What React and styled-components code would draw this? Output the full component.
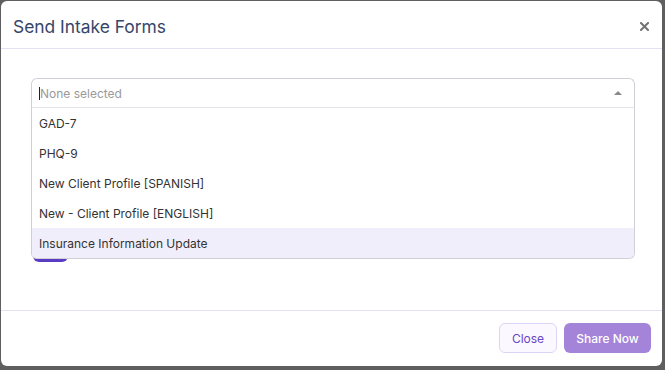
import React from 'react';
import styled, { createGlobalStyle } from 'styled-components';

const GlobalStyle = createGlobalStyle`
  html, body {
    margin: 0;
    padding: 0;
    background: #5f5f5f;
    font-family: Inter, 'Noto Sans', sans-serif;
  }
  * { box-sizing: border-box; }
`;

const options = [
  'GAD-7',
  'PHQ-9',
  'New Client Profile [SPANISH]',
  'New - Client Profile [ENGLISH]',
  'Insurance Information Update',
];

const App = () => {
  return (
    <Backdrop>
      <GlobalStyle />
      <Modal>
        <Header>
          <Title>Send Intake Forms</Title>
          <CloseX aria-label="close">
            <svg width="9" height="9" viewBox="0 0 9 9">
              <path d="M1 1 L8 8 M8 1 L1 8" stroke="#747474" strokeWidth="2" strokeLinecap="square" />
            </svg>
          </CloseX>
        </Header>
        <Body>
          <SelectWrap>
            <Control>
              <Caret />
              <Placeholder>None selected</Placeholder>
              <Arrow />
            </Control>
            <Menu>
              {options.map((o, i) => (
                <Option key={o} $active={i === options.length - 1}>{o}</Option>
              ))}
            </Menu>
          </SelectWrap>
          <AddButton />
        </Body>
        <Footer>
          <GhostButton>Close</GhostButton>
          <PrimaryButton>Share Now</PrimaryButton>
        </Footer>
      </Modal>
    </Backdrop>
  );
};

export default App;

const Backdrop = styled.div`
  width: 665px;
  height: 370px;
  padding: 1px 3px 4px 1px;
`;

const Modal = styled.div`
  width: 661px;
  height: 365px;
  background: #fff;
  border-radius: 6px;
  display: flex;
  flex-direction: column;
  overflow: hidden;
`;

const Header = styled.div`
  height: 48px;
  flex: none;
  display: flex;
  align-items: center;
  justify-content: space-between;
  padding: 3px 13px 0 12px;
  border-bottom: 1px solid #e4e1f2;
`;

const Title = styled.h2`
  margin: 0;
  font-size: 17.4px;
  font-weight: 400;
  color: #36466a;
`;

const CloseX = styled.button`
  border: 0;
  background: none;
  padding: 0;
  display: flex;
`;

const Body = styled.div`
  height: 261px;
  flex: none;
  padding: 29px 31px 0 30px;
  display: flex;
  flex-direction: column;
  align-items: flex-start;
`;

const SelectWrap = styled.div`
  position: relative;
  width: 604px;
  z-index: 2;
`;

const Control = styled.div`
  height: 30px;
  border: 1px solid #cfcfd6;
  border-bottom-color: #dcdce2;
  border-radius: 6px 6px 0 0;
  display: flex;
  align-items: center;
  padding: 0 12px 0 7px;
  background: #fff;
`;

const Caret = styled.span`
  width: 1px;
  height: 13px;
  background: #222;
`;

const Placeholder = styled.span`
  flex: 1;
  font-size: 12px;
  color: #9a9a9a;
`;

const Arrow = styled.span`
  width: 0;
  height: 0;
  border-left: 4px solid transparent;
  border-right: 4px solid transparent;
  border-bottom: 4px solid #8a8a8a;
`;

const Menu = styled.div`
  position: absolute;
  left: 0;
  right: 0;
  top: 29px;
  background: #fff;
  border: 1px solid #cfcfd6;
  border-top: 1px solid #e4e4ea;
  border-radius: 0 0 6px 6px;
  overflow: hidden;
`;

const Option = styled.div`
  height: 30px;
  display: flex;
  align-items: center;
  padding: 0 7px;
  font-size: 12px;
  color: #333;
  background: ${p => (p.$active ? '#f1eefc' : '#fff')};
`;

const AddButton = styled.button`
  margin-top: 124px;
  margin-left: 2px;
  width: 35px;
  height: 30px;
  border: 0;
  border-radius: 6px;
  background: #5a3cc4;
`;

const Footer = styled.div`
  flex: 1;
  border-top: 1px solid #e4e1f2;
  display: flex;
  justify-content: flex-end;
  align-items: flex-start;
  gap: 7px;
  padding: 12px 11px 0 0;
`;

const GhostButton = styled.button`
  height: 30px;
  width: 58px;
  padding: 0;
  border: 1px solid #ddd3f6;
  border-radius: 6px;
  background: #fbf9ff;
  color: #6846c6;
  font-family: Inter, sans-serif;
  font-size: 12px;
`;

const PrimaryButton = styled.button`
  height: 30px;
  width: 87px;
  padding: 0;
  border: 0;
  border-radius: 6px;
  background: #a384d8;
  color: #fff;
  font-family: Inter, sans-serif;
  font-size: 12px;
  font-weight: 500;
`;
